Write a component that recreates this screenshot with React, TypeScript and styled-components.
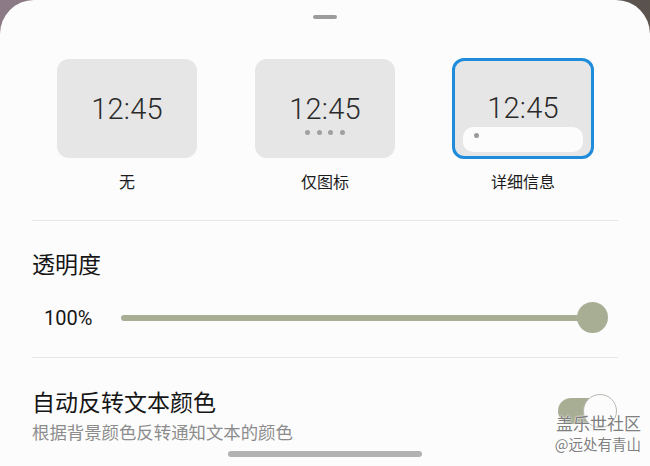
import styled, { createGlobalStyle } from "styled-components";

const GlobalStyle = createGlobalStyle`
  html, body {
    margin: 0;
    padding: 0;
    width: 650px;
    height: 466px;
    overflow: hidden;
    background: linear-gradient(90deg, #8c7a86 0%, #74686c 50%, #5a524d 100%);
  }
  * { box-sizing: border-box; }
`;

const Sheet = styled.div`
  position: relative;
  width: 650px;
  height: 466px;
  background-color: #fcfcfc;
  border-radius: 34px 34px 0 0;
  font-family: Roboto, "Noto Sans CJK SC", sans-serif;
  color: #1c1c1c;
  padding-top: 15px;
  overflow: hidden;
`;

const Handle = styled.div`
  width: 24px;
  height: 4px;
  border-radius: 2px;
  background-color: #9c9c9c;
  margin: 0 auto;
`;

const StyleGrid = styled.div`
  display: grid;
  grid-template-columns: repeat(3, 198px);
  padding: 0 28px;
  margin-top: 40px;
`;

const StyleOption = styled.div`
  display: flex;
  flex-direction: column;
  align-items: center;
`;

interface PreviewProps {
  selected?: boolean;
}
const Preview = styled.div<PreviewProps>`
  display: flex;
  flex-direction: column;
  align-items: center;
  width: ${({ selected }) => (selected ? "142px" : "140px")};
  height: ${({ selected }) => (selected ? "101px" : "99px")};
  margin-top: ${({ selected }) => (selected ? "-1px" : "0")};
  margin-bottom: ${({ selected }) => (selected ? "-1px" : "0")};
  border-radius: 12px;
  background-color: #e6e6e6;
  border: ${({ selected }) => (selected ? "3px solid #1f8cdb" : "none")};
  padding-top: ${({ selected }) => (selected ? "34px" : "37px")};
`;

const Time = styled.div`
  font: 300 29px Roboto, sans-serif;
  line-height: 26px;
  color: #2a2a2a;
  letter-spacing: 0.2px;
`;

const Dots = styled.div`
  display: flex;
  gap: 6.5px;
  margin-top: 8px;

  span {
    width: 5px;
    height: 5px;
    border-radius: 50%;
    background-color: #a0a0a0;
  }
`;

const DetailPill = styled.div`
  display: flex;
  align-items: center;
  width: 120px;
  height: 25px;
  margin-top: 6px;
  border-radius: 10px;
  background-color: #fcfcfc;
  padding-left: 11px;

  span {
    width: 5px;
    height: 5px;
    border-radius: 50%;
    background-color: #9a9a9a;
    margin-top: -8px;
  }
`;

const OptionLabel = styled.div`
  margin-top: 12px;
  font: 400 16px "Noto Sans CJK SC", sans-serif;
  line-height: 22px;
  color: #1c1c1c;
`;

const Divider = styled.div`
  height: 1px;
  background-color: #e6e6e6;
  margin: 0 32px;
`;

const Section = styled.div`
  padding: 0 32px;
`;

const SectionTitle = styled.div`
  font: 400 23px "Noto Sans CJK SC", sans-serif;
  line-height: 30px;
  color: #161616;
`;

const SliderRow = styled.div`
  display: flex;
  align-items: center;
  height: 32px;
  margin-top: 24px;
  margin-bottom: 23px;
  padding-left: 12px;
`;

const SliderValue = styled.div`
  width: 77px;
  font: 400 20px Roboto, sans-serif;
  color: #161616;
`;

const Track = styled.div`
  position: relative;
  width: 471px;
  height: 6px;
  border-radius: 3px;
  background-color: #a8ae94;
`;

const Thumb = styled.div`
  position: absolute;
  right: -16px;
  top: -13px;
  width: 31px;
  height: 31px;
  border-radius: 50%;
  background-color: #a8ae94;
`;

const ToggleRow = styled.div`
  display: flex;
  align-items: center;
  justify-content: space-between;
  padding: 28px 4px 0 0;
`;

const ToggleText = styled.div`
  display: flex;
  flex-direction: column;
  gap: 4px;
`;

const Subtitle = styled.div`
  font: 400 17.4px "Noto Sans CJK SC", sans-serif;
  line-height: 24px;
  color: #8c8c8c;
`;

const Switch = styled.div`
  position: relative;
  width: 56px;
  height: 26px;
  border-radius: 13px;
  background-color: #a8ae94;
  margin-top: -8px;
`;

const SwitchKnob = styled.div`
  position: absolute;
  right: -3px;
  top: -4px;
  width: 34px;
  height: 34px;
  border-radius: 50%;
  background-color: #fcfcfc;
  border: 1.5px solid #b9b9b3;
`;

const HomeBar = styled.div`
  position: absolute;
  left: 228px;
  bottom: 9px;
  width: 194px;
  height: 6px;
  border-radius: 3px;
  background-color: #b2b2b2;
`;

const Watermark = styled.div`
  position: absolute;
  right: 9px;
  bottom: 12px;
  display: flex;
  flex-direction: column;
  align-items: flex-end;
  font-family: "Noto Sans CJK SC", sans-serif;
  color: rgba(110, 110, 110, 0.9);
  text-shadow: 0 0 1px #fff, 0 0 2px #fff;

  .site {
    font-size: 17px;
    line-height: 23px;
  }

  .user {
    font-size: 14.5px;
    line-height: 20px;
  }
`;

const App = (): React.ReactElement => (
  <Sheet>
    <GlobalStyle />
    <Handle />
    <StyleGrid>
      <StyleOption>
        <Preview>
          <Time>12:45</Time>
        </Preview>
        <OptionLabel>无</OptionLabel>
      </StyleOption>
      <StyleOption>
        <Preview>
          <Time>12:45</Time>
          <Dots>
            <span />
            <span />
            <span />
            <span />
          </Dots>
        </Preview>
        <OptionLabel>仅图标</OptionLabel>
      </StyleOption>
      <StyleOption>
        <Preview selected>
          <Time>12:45</Time>
          <DetailPill>
            <span />
          </DetailPill>
        </Preview>
        <OptionLabel>详细信息</OptionLabel>
      </StyleOption>
    </StyleGrid>

    <Divider style={{ marginTop: 28 }} />

    <Section>
      <SectionTitle style={{ paddingTop: 27 }}>透明度</SectionTitle>
      <SliderRow>
        <SliderValue>100%</SliderValue>
        <Track>
          <Thumb />
        </Track>
      </SliderRow>
    </Section>

    <Divider />

    <Section>
      <ToggleRow>
        <ToggleText>
          <SectionTitle>自动反转文本颜色</SectionTitle>
          <Subtitle>根据背景颜色反转通知文本的颜色</Subtitle>
        </ToggleText>
        <Switch>
          <SwitchKnob />
        </Switch>
      </ToggleRow>
    </Section>

    <HomeBar />
    <Watermark>
      <span className="site">盖乐世社区</span>
      <span className="user">@远处有青山</span>
    </Watermark>
  </Sheet>
);

export default App;
